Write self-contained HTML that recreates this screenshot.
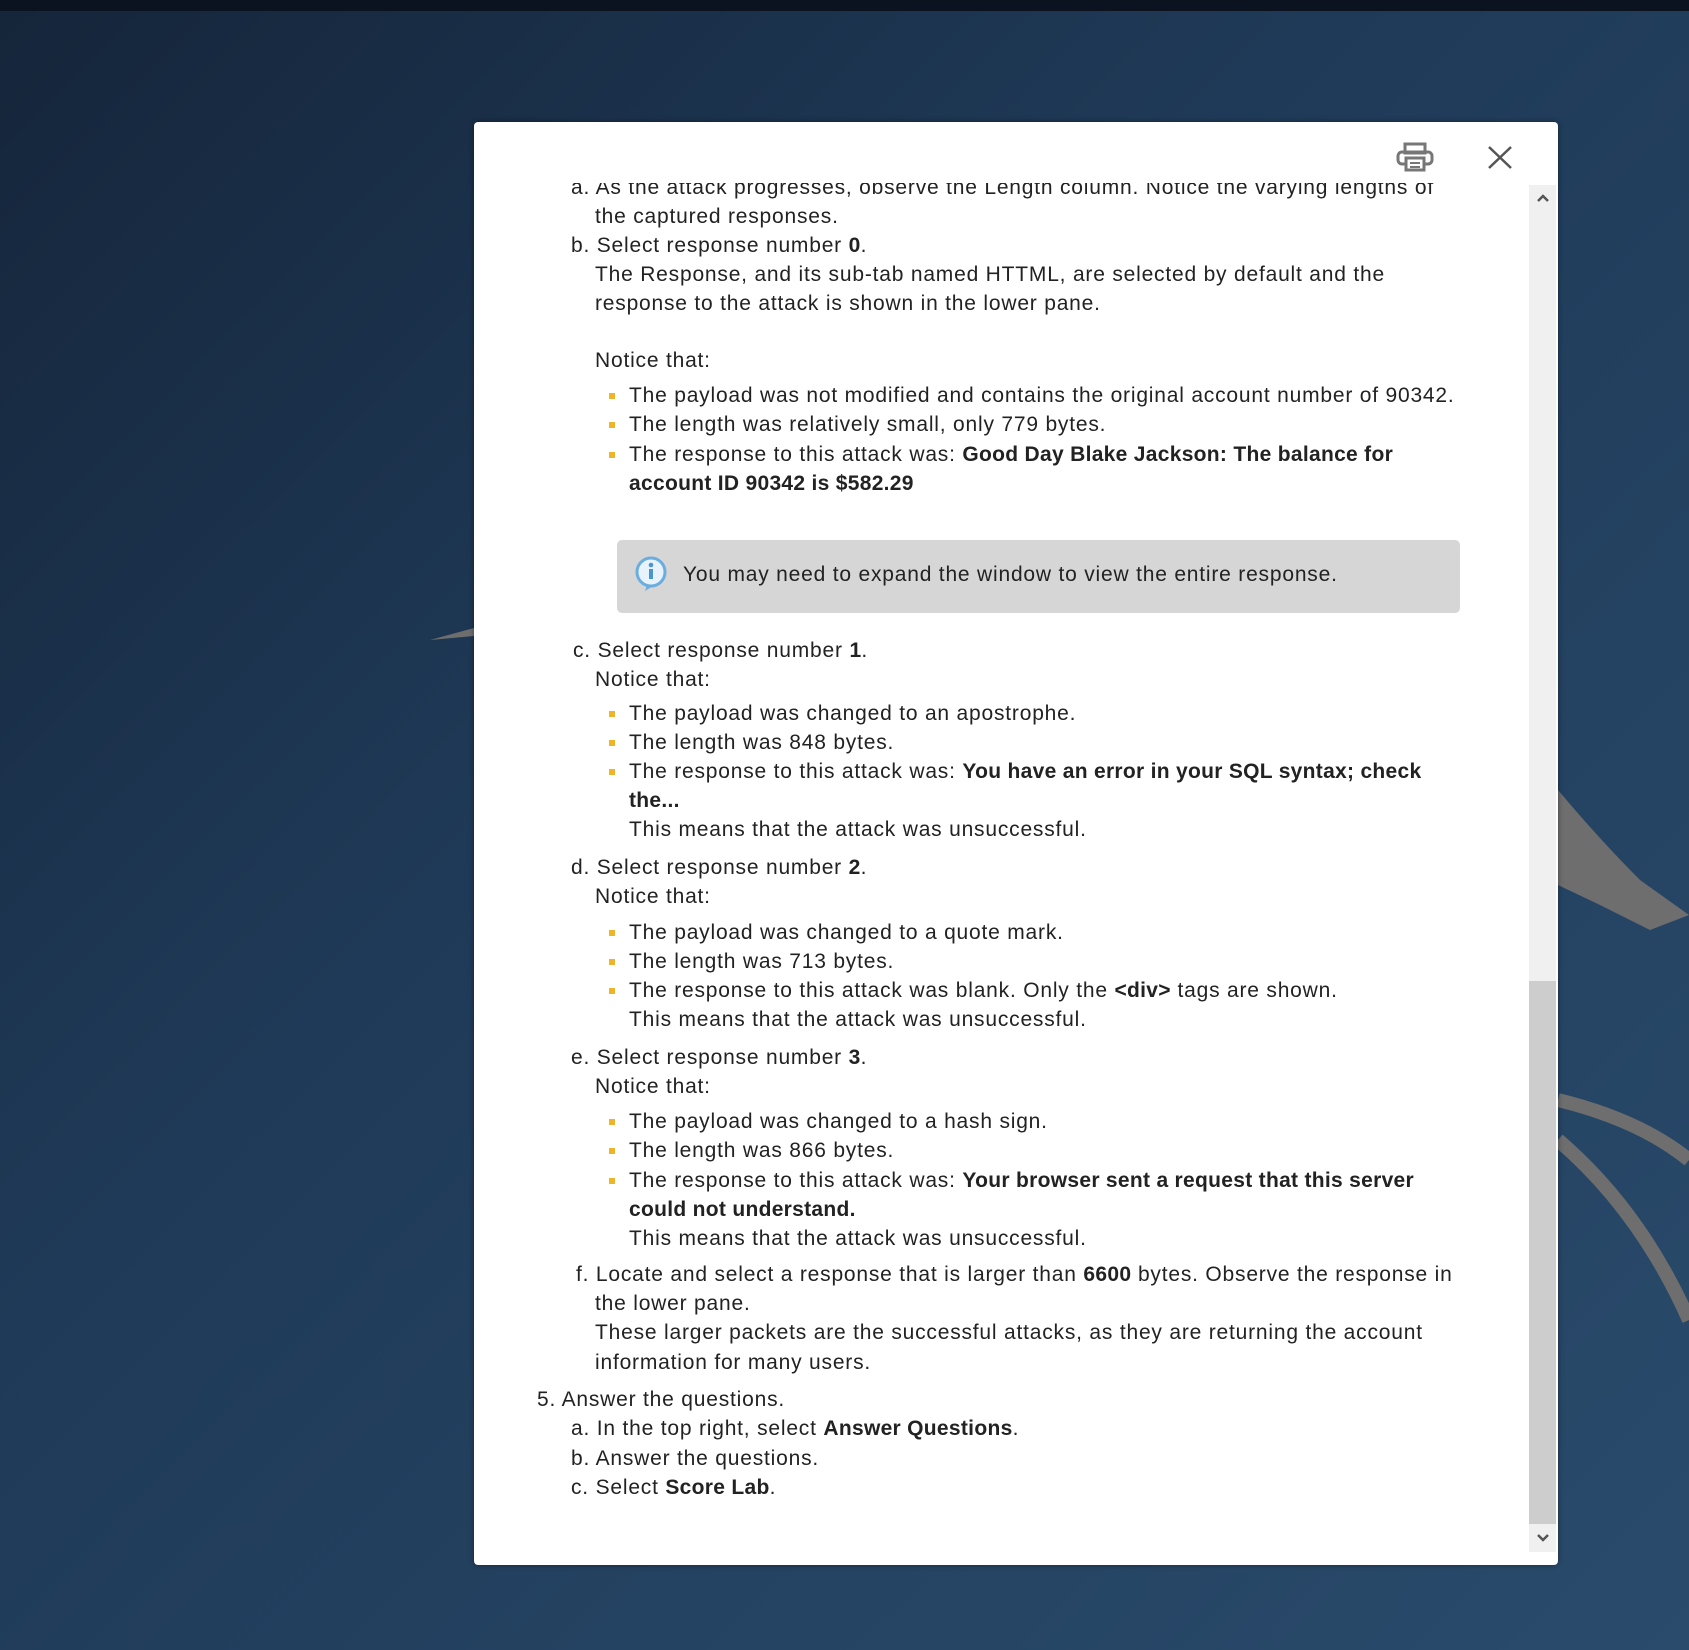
<!DOCTYPE html>
<html><head><meta charset="utf-8">
<style>
*{margin:0;padding:0;box-sizing:border-box}
html,body{width:1689px;height:1650px;overflow:hidden}
body{position:relative;font-family:"Liberation Sans",sans-serif;background:linear-gradient(135deg,#15253a 0%,#1f3a58 40%,#2a4b6c 100%);}
.top{position:absolute;left:0;top:0;width:1689px;height:11px;background:#0b1320}
.modal{position:absolute;left:474px;top:122px;width:1084px;height:1443px;background:#fff;border-radius:4px;box-shadow:0 0 6px rgba(0,0,0,.4)}
.clip{position:absolute;left:474px;top:183px;width:1055px;height:1368px;overflow:hidden}
.l{position:absolute;white-space:nowrap;font-size:21px;line-height:29px;color:#222;letter-spacing:0.8px}
.l b{font-weight:bold;letter-spacing:0.3px}
.bul{position:absolute;width:6px;height:6px;background:#f0b429}
.info{position:absolute;left:143px;top:357px;width:843px;height:73px;background:#d6d6d6;border-radius:5px}
.sb{position:absolute;left:1529px;top:185px;width:27px;height:1367px;background:#f0f0f0}
.thumb{position:absolute;left:1529px;top:981px;width:27px;height:543px;background:#cdcdcd}
</style></head><body>
<div class="top"></div>
<svg style="position:absolute;left:0;top:0" width="1689" height="1650">
<path d="M430 640 L474 628 L474 636 Z" fill="#6e6e6e"/>
<path d="M1558 790 Q1600 840 1640 880 L1689 915 L1650 930 L1600 905 L1558 885 Z" fill="#6e6e6e"/>
<path d="M1558 1100 Q1640 1120 1689 1160" stroke="#6e6e6e" stroke-width="14" fill="none"/>
<path d="M1558 1140 Q1640 1210 1689 1320" stroke="#6e6e6e" stroke-width="14" fill="none"/>
</svg>
<div class="modal"></div>
<div class="clip">
<div class="l" style="left:97px;top:-10px">a. As the attack progresses, observe the Length column. Notice the varying lengths of</div>
<div class="l" style="left:121px;top:19px">the captured responses.</div>
<div class="l" style="left:97px;top:48px">b. Select response number <b>0</b>.</div>
<div class="l" style="left:121px;top:77px">The Response, and its sub-tab named HTTML, are selected by default and the</div>
<div class="l" style="left:121px;top:106px">response to the attack is shown in the lower pane.</div>
<div class="l" style="left:121px;top:163px">Notice that:</div>
<div class="bul" style="left:135px;top:210px"></div>
<div class="l" style="left:155px;top:198px">The payload was not modified and contains the original account number of 90342.</div>
<div class="bul" style="left:135px;top:239px"></div>
<div class="l" style="left:155px;top:227px">The length was relatively small, only 779 bytes.</div>
<div class="bul" style="left:135px;top:269px"></div>
<div class="l" style="left:155px;top:257px">The response to this attack was: <b>Good Day Blake Jackson: The balance for</b></div>
<div class="l" style="left:155px;top:286px"><b>account ID 90342 is $582.29</b></div>
<div class="info">
<svg style="position:absolute;left:16px;top:16px" width="38" height="36" viewBox="0 0 38 36"><circle cx="18" cy="16" r="14" fill="#e8f2fb" stroke="#6aaee0" stroke-width="3"/><path d="M14 29 L12 35 L20 30" fill="#6aaee0"/><rect x="16" y="13" width="4" height="10" fill="#4a94d0"/><circle cx="18" cy="9" r="2.3" fill="#4a94d0"/></svg>
<div class="l" style="left:66px;top:20px">You may need to expand the window to view the entire response.</div>
</div>
<div class="l" style="left:99px;top:453px">c. Select response number <b>1</b>.</div>
<div class="l" style="left:121px;top:482px">Notice that:</div>
<div class="bul" style="left:135px;top:528px"></div>
<div class="l" style="left:155px;top:516px">The payload was changed to an apostrophe.</div>
<div class="bul" style="left:135px;top:557px"></div>
<div class="l" style="left:155px;top:545px">The length was 848 bytes.</div>
<div class="bul" style="left:135px;top:586px"></div>
<div class="l" style="left:155px;top:574px">The response to this attack was: <b>You have an error in your SQL syntax; check</b></div>
<div class="l" style="left:155px;top:603px"><b>the...</b></div>
<div class="l" style="left:155px;top:632px">This means that the attack was unsuccessful.</div>
<div class="l" style="left:97px;top:670px">d. Select response number <b>2</b>.</div>
<div class="l" style="left:121px;top:699px">Notice that:</div>
<div class="bul" style="left:135px;top:747px"></div>
<div class="l" style="left:155px;top:735px">The payload was changed to a quote mark.</div>
<div class="bul" style="left:135px;top:776px"></div>
<div class="l" style="left:155px;top:764px">The length was 713 bytes.</div>
<div class="bul" style="left:135px;top:805px"></div>
<div class="l" style="left:155px;top:793px">The response to this attack was blank. Only the <b>&lt;div&gt;</b> tags are shown.</div>
<div class="l" style="left:155px;top:822px">This means that the attack was unsuccessful.</div>
<div class="l" style="left:97px;top:860px">e. Select response number <b>3</b>.</div>
<div class="l" style="left:121px;top:889px">Notice that:</div>
<div class="bul" style="left:135px;top:936px"></div>
<div class="l" style="left:155px;top:924px">The payload was changed to a hash sign.</div>
<div class="bul" style="left:135px;top:965px"></div>
<div class="l" style="left:155px;top:953px">The length was 866 bytes.</div>
<div class="bul" style="left:135px;top:995px"></div>
<div class="l" style="left:155px;top:983px">The response to this attack was: <b>Your browser sent a request that this server</b></div>
<div class="l" style="left:155px;top:1012px"><b>could not understand.</b></div>
<div class="l" style="left:155px;top:1041px">This means that the attack was unsuccessful.</div>
<div class="l" style="left:102px;top:1077px">f. Locate and select a response that is larger than <b>6600</b> bytes. Observe the response in</div>
<div class="l" style="left:121px;top:1106px">the lower pane.</div>
<div class="l" style="left:121px;top:1135px">These larger packets are the successful attacks, as they are returning the account</div>
<div class="l" style="left:121px;top:1165px">information for many users.</div>
<div class="l" style="left:63px;top:1202px">5. Answer the questions.</div>
<div class="l" style="left:97px;top:1231px">a. In the top right, select <b>Answer Questions</b>.</div>
<div class="l" style="left:97px;top:1261px">b. Answer the questions.</div>
<div class="l" style="left:97px;top:1290px">c. Select <b>Score Lab</b>.</div>
</div>
<svg style="position:absolute;left:1396px;top:142px" width="38" height="30" viewBox="0 0 38 30" fill="none" stroke="#777" stroke-width="3"><rect x="9" y="2" width="20" height="9"/><rect x="2" y="10" width="34" height="12" rx="4"/><rect x="10" y="16" width="18" height="12" fill="#fff"/><line x1="14" y1="21" x2="24" y2="21" stroke-width="2"/><line x1="14" y1="25" x2="24" y2="25" stroke-width="2"/></svg>
<svg style="position:absolute;left:1487px;top:145px" width="26" height="25" viewBox="0 0 26 25" stroke="#555" stroke-width="2.5"><line x1="2" y1="2" x2="24" y2="23"/><line x1="24" y1="2" x2="2" y2="23"/></svg>
<div class="sb"></div>
<div class="thumb"></div>
<svg style="position:absolute;left:1536px;top:193px" width="14" height="10" viewBox="0 0 14 10"><path d="M2 8 L7 3 L12 8" stroke="#555" stroke-width="2.5" fill="none"/></svg>
<svg style="position:absolute;left:1536px;top:1533px" width="14" height="10" viewBox="0 0 14 10"><path d="M2 2 L7 7 L12 2" stroke="#555" stroke-width="2.5" fill="none"/></svg>
</body></html>
